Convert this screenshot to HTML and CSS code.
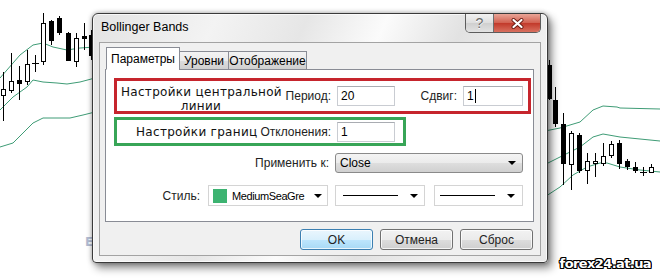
FILE: index.html
```html
<!DOCTYPE html>
<html lang="ru">
<head>
    <meta charset="UTF-8">
    <title>Bollinger Bands</title>
    <link rel="stylesheet" href="styles.css">
</head>
<body>
    <svg class="chart" width="660" height="278" viewBox="0 0 660 278">
        <g class="bands">
            <polyline points="0,78 20,55 33,45 43,43 53,47 67,50 80,48 95,47"/>
            <polyline points="0,110 13,97 27,87 33,80 43,82 57,83 67,84 80,82 95,78"/>
            <polyline points="0,147 13,143 23,133 33,123 43,118 57,118 70,118 83,115 95,112"/>
            <polyline points="540,132 560,128 580,122 593,110 603,106 617,107 620,108 660,109"/>
            <polyline points="540,167 560,157 580,147 593,137 603,134 620,137 660,141"/>
            <polyline points="540,200 560,187 573,175 587,167 600,163 607,163 620,167 640,170 660,172"/>
        </g>
        <g class="wicks">
            <line x1="3.5" y1="72" x2="3.5" y2="121"/>
            <line x1="11.5" y1="53" x2="11.5" y2="93"/>
            <line x1="19.5" y1="66" x2="19.5" y2="100"/>
            <line x1="27.5" y1="50" x2="27.5" y2="85"/>
            <line x1="35.5" y1="55" x2="35.5" y2="72"/>
            <line x1="43.5" y1="13" x2="43.5" y2="65"/>
            <line x1="51.5" y1="20" x2="51.5" y2="45"/>
            <line x1="59.5" y1="16" x2="59.5" y2="35"/>
            <line x1="68.5" y1="32" x2="68.5" y2="60"/>
            <line x1="76.5" y1="33" x2="76.5" y2="67"/>
            <line x1="84.5" y1="23" x2="84.5" y2="50"/>
            <line x1="91.5" y1="30" x2="91.5" y2="60"/>
            <line x1="549.5" y1="60" x2="549.5" y2="100"/>
            <line x1="555.5" y1="87" x2="555.5" y2="127"/>
            <line x1="563.5" y1="113" x2="563.5" y2="185"/>
            <line x1="571.5" y1="131" x2="571.5" y2="190"/>
            <line x1="579.5" y1="133" x2="579.5" y2="173"/>
            <line x1="587.5" y1="153" x2="587.5" y2="184"/>
            <line x1="595.5" y1="153" x2="595.5" y2="177"/>
            <line x1="603.5" y1="143" x2="603.5" y2="166"/>
            <line x1="611.5" y1="141" x2="611.5" y2="158"/>
            <line x1="619.5" y1="140" x2="619.5" y2="169"/>
            <line x1="627.5" y1="159" x2="627.5" y2="170"/>
            <line x1="635.5" y1="162" x2="635.5" y2="173"/>
            <line x1="643.5" y1="167" x2="643.5" y2="176"/>
            <line x1="651.5" y1="164" x2="651.5" y2="173"/>
            <line x1="32" y1="63.5" x2="39" y2="63.5"/>
            <line x1="640" y1="172.5" x2="647" y2="172.5"/>
        </g>
        <g class="up">
            <rect x="1.5" y="89.5" width="4" height="6"/>
            <rect x="9.5" y="81.5" width="4" height="9"/>
            <rect x="25.5" y="64.5" width="4" height="17"/>
            <rect x="41.5" y="23.5" width="4" height="38"/>
            <rect x="74.5" y="38.5" width="4" height="23"/>
            <rect x="569.5" y="133.5" width="4" height="31"/>
            <rect x="585.5" y="161.5" width="4" height="9"/>
            <rect x="593.5" y="161.5" width="4" height="2"/>
            <rect x="601.5" y="156.5" width="4" height="7"/>
            <rect x="609.5" y="144.5" width="4" height="11"/>
            <rect x="649.5" y="167.5" width="4" height="5"/>
        </g>
        <g class="down">
            <rect x="17.5" y="80.5" width="4" height="3"/>
            <rect x="49.5" y="21.5" width="4" height="19"/>
            <rect x="57.5" y="18.5" width="4" height="14"/>
            <rect x="66.5" y="33.5" width="4" height="27"/>
            <rect x="82.5" y="36.5" width="4" height="2"/>
            <rect x="89.5" y="35.5" width="4" height="20"/>
            <rect x="547.5" y="65.5" width="4" height="33"/>
            <rect x="553.5" y="100.5" width="4" height="23"/>
            <rect x="561.5" y="124.5" width="4" height="39"/>
            <rect x="577.5" y="135.5" width="4" height="35"/>
            <rect x="617.5" y="143.5" width="4" height="20"/>
            <rect x="625.5" y="161.5" width="4" height="5"/>
            <rect x="633.5" y="167.5" width="4" height="3"/>
        </g>
        <text class="chart-mark" x="85" y="246">E</text>
    </svg>

    <div class="dialog">
        <div class="titlebar">
            <span class="title">Bollinger Bands</span>
            <div class="caption-buttons">
                <span class="cap-btn cap-help">?</span>
                <span class="cap-btn cap-close">
                    <svg width="13" height="11" viewBox="0 0 13 11">
                        <path d="M2.5 2 L10.5 9 M10.5 2 L2.5 9" stroke="#6b1d14" stroke-width="4" stroke-linecap="round"/>
                        <path d="M2.5 2 L10.5 9 M10.5 2 L2.5 9" stroke="#fff" stroke-width="2.2" stroke-linecap="round"/>
                    </svg>
                </span>
            </div>
        </div>

        <div class="client">
            <div class="tabs">
                <span class="tab tab-active">Параметры</span>
                <span class="tab tab-levels">Уровни</span>
                <span class="tab tab-view">Отображение</span>
            </div>

            <div class="panel">
                <div class="box box-red">
                    <div class="note note-center">Настройки центральной<br>линии</div>
                    <span class="label label-period">Период:</span>
                    <span class="field field-period">20</span>
                    <span class="label label-shift">Сдвиг:</span>
                    <span class="field field-shift">1<span class="caret"></span></span>
                </div>

                <div class="box box-green">
                    <div class="label-group">
                        <span class="note">Настройки границ</span>
                        <span class="label">Отклонения:</span>
                    </div>
                    <span class="field field-period">1</span>
                </div>

                <div class="form-row row-apply">
                    <span class="label label-apply">Применить к:</span>
                    <div class="combo">
                        <span>Close</span>
                        <span class="arrow"></span>
                    </div>
                </div>

                <div class="form-row row-style">
                    <span class="label label-style">Стиль:</span>
                    <div class="picker picker-color">
                        <span class="swatch"></span>
                        <span class="picker-text">MediumSeaGre</span>
                        <span class="arrow"></span>
                    </div>
                    <div class="picker picker-line">
                        <span class="line-sample"></span>
                        <span class="arrow"></span>
                    </div>
                    <div class="picker picker-width">
                        <span class="line-sample"></span>
                        <span class="arrow"></span>
                    </div>
                </div>
            </div>

            <div class="buttons">
                <button class="btn btn-default">OK</button>
                <button class="btn">Отмена</button>
                <button class="btn">Сброс</button>
            </div>
        </div>
    </div>

    <div class="watermark">forex24.at.ua</div>
</body>
</html>
```

FILE: styles.css
```css
* {
    box-sizing: border-box;
}

body {
    margin: 0;
    width: 660px;
    height: 278px;
    overflow: hidden;
    position: relative;
    background-color: #fff;
    font-family: 'Liberation Sans', Arial, sans-serif;
    font-size: 12px;
    color: #1a1a1a;
}

/* chart behind the dialog */
.chart {
    position: absolute;
    left: 0;
    top: 0;
}

.bands polyline {
    fill: none;
    stroke: #3f9c76;
    stroke-width: 1;
}

.wicks line {
    stroke: #000;
    stroke-width: 1;
}

.up rect {
    fill: #fff;
    stroke: #000;
}

.down rect {
    fill: #000;
    stroke: #000;
}

.chart-mark {
    font-family: 'DejaVu Sans', sans-serif;
    font-weight: bold;
    font-size: 12px;
    fill: #b3bcd2;
}

/* dialog window */
.dialog {
    position: absolute;
    left: 92px;
    top: 13px;
    width: 456px;
    height: 250px;
    padding: 0 6px 6px 6px;
    display: flex;
    flex-direction: column;
    border: 1px solid #3a3a3a;
    border-radius: 6px 6px 4px 4px;
    background: linear-gradient(115deg, #e3e3e3 0%, #f3f3f3 22%, #e6e6e6 38%, #fbfbfb 52%, #e2e2e2 66%, #f0f0f0 82%, #e8e8e8 100%);
    box-shadow: inset 0 0 0 1px rgba(255, 255, 255, 0.7), 0 0 5px rgba(0, 0, 0, 0.35), 4px 5px 8px rgba(0, 0, 0, 0.45);
}

.titlebar {
    height: 28px;
    display: flex;
    justify-content: space-between;
    align-items: flex-start;
}

.title {
    padding: 6px 0 0 2px;
    font-size: 12.5px;
    color: #000;
}

.caption-buttons {
    display: flex;
    height: 19px;
    border: 1px solid #5c5c5c;
    border-top: none;
    border-radius: 0 0 5px 5px;
    overflow: hidden;
}

.cap-btn {
    display: flex;
    align-items: center;
    justify-content: center;
    height: 100%;
}

.cap-help {
    width: 28px;
    border-right: 1px solid #6e6e6e;
    background: linear-gradient(#f1f1f1, #dedede 50%, #cfcfcf 51%, #e2e2e2);
    color: #6a6a6a;
    font-size: 14px;
    text-shadow: 0 1px 0 #fff;
}

.cap-close {
    width: 46px;
    background: linear-gradient(#e9a597, #d26252 48%, #c23a2b 52%, #d8705f);
}

.client {
    flex: 1;
    padding: 4px 6px 0 5px;
    border: 1px solid #a3a3a3;
    background-color: #f0f0f0;
}

/* tabs */
.tabs {
    display: flex;
    align-items: flex-end;
    height: 23px;
    margin: 0 0 -1px 1px;
    position: relative;
    z-index: 1;
}

.tab {
    height: 19px;
    padding-top: 2px;
    text-align: center;
    border: 1px solid #898c95;
    margin-left: -1px;
    background: linear-gradient(#f3f3f3, #ebebeb 50%, #dddddd 51%, #d0d0d0);
    color: #000;
}

.tab-active {
    height: 23px;
    width: 74px;
    margin-left: 0;
    padding-top: 4px;
    background: #fff;
    border-bottom-color: #fff;
}

.tab-levels {
    width: 50px;
}

.tab-view {
    width: 79px;
}

.panel {
    height: 153px;
    padding: 8px 0 0 8px;
    border: 1px solid #898c95;
    background-color: #fff;
}

/* highlighted boxes */
.box {
    display: flex;
    align-items: center;
}

.box-red {
    width: 417px;
    height: 36px;
    border: 3px solid #c6252d;
    margin-bottom: 3px;
}

.box-green {
    width: 292px;
    height: 29px;
    border: 3px solid #38a557;
}

.note {
    font-family: 'DejaVu Sans', sans-serif;
    font-size: 12px;
    letter-spacing: 0.3px;
    white-space: nowrap;
    color: #111;
}

.note-center {
    align-self: flex-start;
    width: 160px;
    margin: 4px 0 0 4px;
    line-height: 14px;
    text-align: center;
}

.label {
    color: #222;
}

.label-period {
    width: 50px;
    text-align: right;
}

.label-shift {
    width: 62px;
    text-align: right;
}

.label-group {
    width: 214px;
    display: flex;
    justify-content: flex-end;
    align-items: baseline;
    gap: 3px;
}

.field {
    height: 20px;
    margin-left: 6px;
    padding: 2px 0 0 3px;
    border: 1px solid #c9ccd2;
    border-top-color: #a9acb2;
    background-color: #fff;
    color: #000;
    display: flex;
    align-items: flex-start;
}

.field-period {
    width: 58px;
}

.field-shift {
    width: 60px;
}

.caret {
    width: 1px;
    height: 14px;
    margin-left: 1px;
    background-color: #000;
}

/* rows below the boxes */
.form-row {
    display: flex;
    align-items: center;
}

.row-apply {
    margin-top: 7px;
}

.row-style {
    margin-top: 12px;
}

.label-apply {
    width: 215px;
    text-align: right;
}

.label-style {
    width: 86px;
    text-align: right;
}

.combo {
    width: 188px;
    height: 20px;
    margin-left: 6px;
    padding: 0 6px 0 4px;
    display: flex;
    align-items: center;
    justify-content: space-between;
    border: 1px solid #8a8a8a;
    border-radius: 3px;
    background: linear-gradient(#f4f4f4, #ebebeb 50%, #dedede 51%, #d0d0d0);
    color: #000;
}

.arrow {
    flex: none;
    width: 0;
    height: 0;
    border-left: 4px solid transparent;
    border-right: 4px solid transparent;
    border-top: 4px solid #000;
}

.picker {
    height: 21px;
    display: flex;
    align-items: center;
    border: 1px solid #d4d4d4;
    background-color: #fff;
}

.picker-color {
    width: 120px;
    margin-left: 8px;
    padding: 0 5px 0 4px;
}

.picker-line {
    width: 90px;
    margin-left: 7px;
    padding: 0 6px 0 7px;
}

.picker-width {
    width: 89px;
    margin-left: 9px;
    padding: 0 7px 0 5px;
}

.swatch {
    flex: none;
    width: 14px;
    height: 14px;
    background-color: #3cb371;
}

.picker-text {
    flex: 1;
    margin: 0 5px 0 5px;
    font-size: 11px;
    letter-spacing: -0.4px;
    white-space: nowrap;
    overflow: hidden;
    color: #000;
}

.line-sample {
    flex: 1;
    height: 1px;
    margin-right: 12px;
    background-color: #000;
}

/* dialog buttons */
.buttons {
    display: flex;
    justify-content: flex-end;
    gap: 7px;
    margin-top: 7px;
    padding-right: 1px;
}

.btn {
    width: 73px;
    height: 21px;
    padding: 0;
    font-family: 'Liberation Sans', Arial, sans-serif;
    font-size: 12px;
    color: #222;
    border: 1px solid #707070;
    border-radius: 3px;
    background: linear-gradient(#f2f2f2, #ebebeb 50%, #dddddd 51%, #cfcfcf);
    box-shadow: inset 0 0 0 1px rgba(255, 255, 255, 0.75);
}

.btn-default {
    border-color: #3c7fb1;
    background: linear-gradient(#eaf6fd, #d9f0fc 50%, #bee6fd 51%, #a7d9f5);
}

/* site watermark */
.watermark {
    position: absolute;
    right: 9px;
    bottom: 7px;
    font-family: 'DejaVu Sans', sans-serif;
    font-weight: bold;
    font-size: 13px;
    letter-spacing: -0.6px;
    color: #fff;
    text-shadow: 1px 0 0 #000, -1px 0 0 #000, 0 1px 0 #000, 0 -1px 0 #000,
        1px 1px 0 #000, -1px -1px 0 #000, 1px -1px 0 #000, -1px 1px 0 #000;
}
```
